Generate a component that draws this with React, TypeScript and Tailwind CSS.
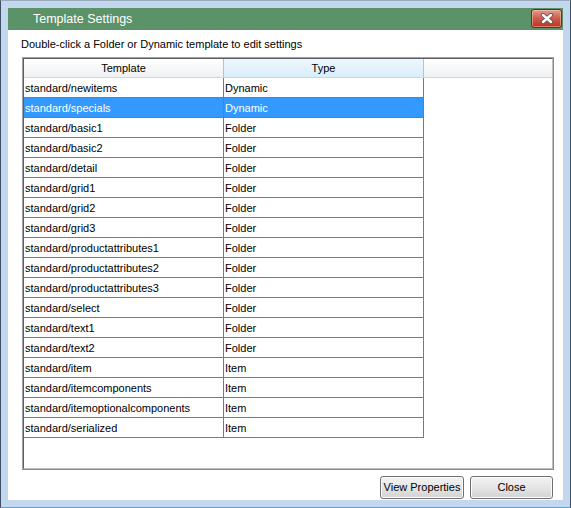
import React from "react";

const rows: [string, string][] = [
  ["standard/newitems", "Dynamic"],
  ["standard/specials", "Dynamic"],
  ["standard/basic1", "Folder"],
  ["standard/basic2", "Folder"],
  ["standard/detail", "Folder"],
  ["standard/grid1", "Folder"],
  ["standard/grid2", "Folder"],
  ["standard/grid3", "Folder"],
  ["standard/productattributes1", "Folder"],
  ["standard/productattributes2", "Folder"],
  ["standard/productattributes3", "Folder"],
  ["standard/select", "Folder"],
  ["standard/text1", "Folder"],
  ["standard/text2", "Folder"],
  ["standard/item", "Item"],
  ["standard/itemcomponents", "Item"],
  ["standard/itemoptionalcomponents", "Item"],
  ["standard/serialized", "Item"],
];

function CloseGlyph() {
  return (
    <svg width="14" height="11" viewBox="0 0 14 11">
      <path d="M3 2 L11 9 M11 2 L3 9" stroke="#5a5a5a" strokeWidth="4.2" strokeLinecap="round" />
      <path d="M3 2 L11 9 M11 2 L3 9" stroke="#ffffff" strokeWidth="2.4" strokeLinecap="round" />
    </svg>
  );
}

export default function App() {
  return (
    <div className="w-[571px] h-[508px] flex flex-col bg-[#c3d8ee] border-x border-t border-x-[#3d4f63] border-t-[#9aaabb] border-b border-b-[#22bfd2] px-[7px] pt-[7px] pb-[7px] font-['Liberation_Sans',Arial,sans-serif] text-black">
      {/* title bar */}
      <div className="h-[22px] bg-[#5b9267] flex items-start relative">
        <div className="h-[22px] flex items-center pl-[25px] text-white text-[12.5px] leading-none">
          Template Settings
        </div>
        <div className="ml-auto mr-[1px] mt-[1px] w-[31px] h-[19px] rounded-[3px] border border-[#6e2a22] bg-gradient-to-b from-[#e49a8e] via-[#cf5a4a] to-[#b8301f] shadow-[inset_0_0_0_1px_rgba(255,220,210,0.45)] flex items-center justify-center">
          <CloseGlyph />
        </div>
      </div>

      {/* client */}
      <div className="flex-1 bg-white flex flex-col">
        <div className="pt-[8px] pl-[13px] h-[20px] text-[11px] leading-[13px]">
          Double-click a Folder or Dynamic template to edit settings
        </div>
        <div className="mt-[7px] ml-[14px] w-[532px] h-[413px] border border-[#a0a0a0] border-b-[#8a8a8a] border-r-[#8a8a8a]">
          <div className="w-full h-full border border-[#5f5f5f] border-b-[#bdbdbd] border-r-[#bdbdbd] bg-white flex flex-col text-[11px] leading-[13px]">
            {/* header */}
            <div className="h-[19px] flex border-b border-[#d5d5d5]">
              <div className="w-[199px] flex items-center justify-center pt-[1px] bg-gradient-to-b from-white to-[#f0f1f3]">
                Template
              </div>
              <div className="w-[201px] flex items-center justify-center pt-[1px] border-x border-[#8fd0f4] bg-gradient-to-b from-[#eef8fe] to-[#d8eefa]">
                Type
              </div>
              <div className="flex-1 bg-gradient-to-b from-white to-[#f0f1f3]" />
            </div>
            {/* rows */}
            {rows.map(([t, ty], i) => {
              const sel = i === 1;
              return (
                <div key={t} className="h-[20px] flex">
                  <div
                    className={
                      sel
                        ? "w-[200px] h-[20px] flex items-center pl-[1px] pt-[2px] border-r border-b border-[#7a7a7a] bg-[#3399ff] text-white"
                        : "w-[200px] h-[20px] flex items-center pl-[1px] pt-[2px] border-r border-b border-[#7a7a7a]"
                    }
                  >
                    {t}
                  </div>
                  <div
                    className={
                      sel
                        ? "w-[200px] h-[20px] flex items-center pl-[1px] pt-[2px] border-r border-b border-[#7a7a7a] bg-[#3399ff] text-white"
                        : "w-[200px] h-[20px] flex items-center pl-[1px] pt-[2px] border-r border-b border-[#7a7a7a]"
                    }
                  >
                    {ty}
                  </div>
                </div>
              );
            })}
          </div>
        </div>
        <div className="mt-[6px] flex justify-end gap-[6px] pr-[10px]">
          <button className="w-[84px] h-[23px] rounded-[3px] border border-[#707070] bg-gradient-to-b from-[#f3f3f3] via-[#e6e6e6] to-[#d2d2d2] shadow-[inset_0_0_0_1px_#fbfbfb] text-[11px] leading-none text-black flex items-center justify-center">
            View Properties
          </button>
          <button className="w-[83px] h-[23px] rounded-[3px] border border-[#707070] bg-gradient-to-b from-[#f3f3f3] via-[#e6e6e6] to-[#d2d2d2] shadow-[inset_0_0_0_1px_#fbfbfb] text-[11px] leading-none text-black flex items-center justify-center">
            Close
          </button>
        </div>
      </div>
    </div>
  );
}
